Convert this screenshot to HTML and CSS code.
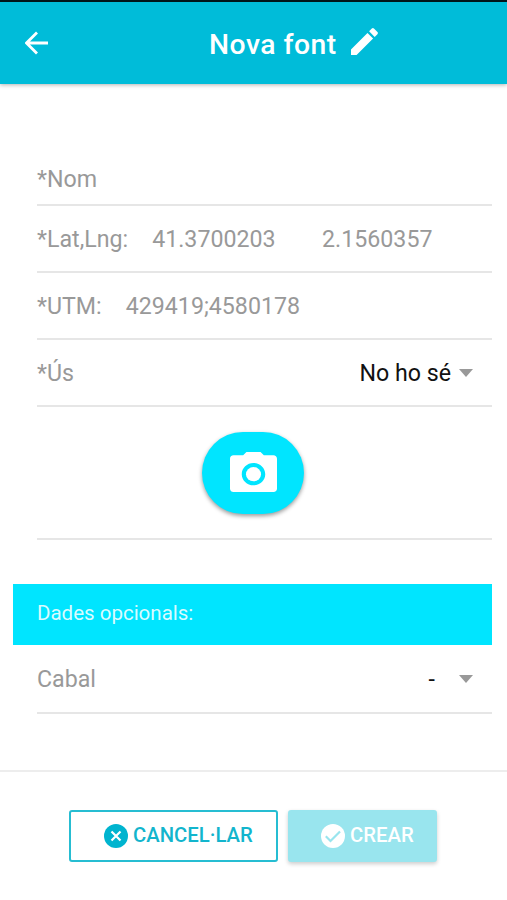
FILE: index.html
```html
<!DOCTYPE html>
<html lang="ca">
<head>
<meta charset="utf-8">
<title>Nova font</title>
<link rel="stylesheet" href="styles.css">
</head>
<body>
<header class="toolbar">
  <svg class="back" viewBox="0 0 24 24"><path d="M23 12H2M12 1.500 1.500 12 12 22.500"/></svg>
  <h1 class="title">Nova font</h1>
  <svg class="pencil" viewBox="3 2.900 18.100 18.100"><path d="M3 17.250V21h3.750L17.810 9.940l-3.750-3.750L3 17.250zM20.710 7.040a1 1 0 0 0 0-1.410l-2.340-2.340a1 1 0 0 0-1.410 0l-1.830 1.830 3.750 3.750 1.830-1.830z"/></svg>
</header>
<main class="form">
  <div class="row name"><span>*Nom</span></div>
  <div class="row"><span class="key">*Lat,Lng:</span><span class="lat">41.3700203</span><span>2.1560357</span></div>
  <div class="row"><span class="key">*UTM:</span><span>429419;4580178</span></div>
  <div class="row"><span>*Ús</span><span class="choice">No ho sé</span><i class="caret"></i></div>
  <div class="row photo">
    <button class="camera"><svg viewBox="2 2 20 18" preserveAspectRatio="none"><circle cx="12" cy="12" r="3.200"/><path d="M9 2 7.600 3.500H3.500c-.9 0-1.500.7-1.500 1.500v13.500c0 .9.700 1.500 1.500 1.500h17c.9 0 1.500-.7 1.500-1.500V5c0-.9-.7-1.500-1.500-1.500h-4.100L15 2H9zm3 15c-2.760 0-5-2.240-5-5s2.240-5 5-5 5 2.240 5 5-2.240 5-5 5z"/></svg></button>
  </div>
  <h2 class="section">Dades opcionals:</h2>
  <div class="row flow"><span>Cabal</span><span class="choice dash">-</span><i class="caret"></i></div>
</main>
<footer class="actions">
  <button class="btn cancel"><svg class="mark" viewBox="0 0 24 24"><circle cx="12" cy="12" r="12"/><path d="m7.500 7.500 9 9m0-9-9 9"/></svg><span>CANCEL·LAR</span></button>
  <button class="btn create"><svg class="mark" viewBox="0 0 24 24"><circle cx="12" cy="12" r="12"/><path d="m4.800 12.300 4.700 4.700L19 7.500"/></svg><span>CREAR</span></button>
</footer>
</body>
</html>
```
FILE: styles.css
```css
* { box-sizing: border-box; }
body {
  margin: 0;
  height: 900px;
  display: flex;
  flex-direction: column;
  overflow: hidden;
  background: #fff;
  color: #999;
  font: 23.2px/30px Roboto, sans-serif;
}
button { font: inherit; border: 0; padding: 0; }
svg { display: block; flex: none; }
.toolbar {
  height: 84px;
  flex: none;
  display: flex;
  align-items: center;
  border-top: 2px solid #00151a;
  padding-left: 25px;
  background: #00bcd9;
  color: #fff;
  box-shadow: 0 1px 4px rgba(0, 0, 0, .3);
}
.back { width: 24px; height: 24px; fill: none; stroke: #fff; stroke-width: 2.8; }
.title {
  width: 127px;
  margin: 4px 0 0 160px;
  font-size: 28.3px;
  line-height: 34px;
  letter-spacing: .5px;
  font-weight: 500;
  white-space: nowrap;
}
.pencil { width: 27px; height: 27px; margin: 0 0 4px 15px; fill: #fff; }
.form { height: 686px; flex: none; padding: 67px 15px 0 13px; }
.row {
  height: 67px;
  margin-left: 24px;
  display: flex;
  align-items: center;
  border-bottom: 2px solid #e6e6e6;
  white-space: nowrap;
}
.name { height: 55px; padding-top: 3px; }
.key { margin-right: 24px; }
.lat { margin-right: 46.5px; }
.choice { margin-left: auto; color: #111; }
.caret {
  margin: 0 19px 0 8px;
  border: solid transparent;
  border-width: 8px 7.5px 0;
  border-top-color: #999;
}
.dash { margin-right: 16px; }
.photo { height: 133px; padding-left: 165px; }
.camera {
  width: 102px;
  height: 82px;
  border-radius: 41px;
  display: grid;
  place-items: center;
  padding-bottom: 2px;
  background: #00e5ff;
  box-shadow: 0 2px 4px rgba(0, 0, 0, .4);
}
.camera svg { width: 47px; height: 40px; fill: #fff; }
.section {
  height: 61px;
  margin: 44px 0 0;
  padding-left: 24px;
  background: #00e5ff;
  color: #d9fbff;
  font-size: 20.5px;
  line-height: 59px;
  font-weight: 400;
}
.flow { height: 69px; }
.actions {
  height: 130px;
  flex: none;
  display: flex;
  gap: 10px;
  padding: 38px 0 0 69px;
  border-top: 2px solid #ededed;
}
.btn {
  height: 52px;
  display: flex;
  align-items: center;
  gap: 5px;
  border-radius: 3px;
  font-size: 20.3px;
  font-weight: 500;
  white-space: nowrap;
}
.btn span { padding-bottom: 2px; }
.mark { width: 24px; height: 24px; }
.mark path { fill: none; stroke-width: 2.2; }
.cancel { width: 209px; padding-left: 33px; border: 2px solid #26bdd2; background: #fff; color: #12b5cd; }
.cancel .mark { fill: #00b4cf; stroke: #fff; }
.cancel circle, .create circle { stroke: none; }
.create { width: 149px; padding-left: 33px; background: #99e5ee; color: #fff; box-shadow: 0 2px 4px rgba(0, 0, 0, .2); }
.create .mark { fill: #fff; stroke: #99e5ee; }
```
